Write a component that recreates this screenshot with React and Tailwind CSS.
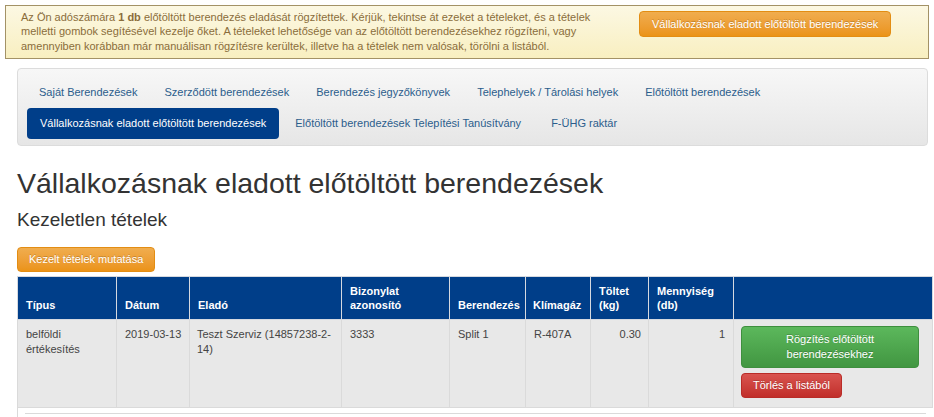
import React from "react";

const navRow1 = ["Saját Berendezések", "Szerződött berendezések", "Berendezés jegyzőkönyvek", "Telephelyek / Tárolási helyek", "Előtöltött berendezések"];
const navRow2 = [
  { label: "Vállalkozásnak eladott előtöltött berendezések", active: true },
  { label: "Előtöltött berendezések Telepítési Tanúsítvány" },
  { label: "F-ÜHG raktár" },
];

const cols = [99, 73, 152, 108, 76, 65, 58, 85, 199];

export default function App() {
  return (
    <div className="w-[934px] h-[417px] overflow-hidden bg-white font-['Liberation_Sans',Arial,sans-serif] text-[#333]">
      {/* Alert */}
      <div className="px-[5px] pt-[5px]">
        <div className="flex border border-[#a39266] bg-gradient-to-b from-[#fcf8e3] to-[#f8efc0] pt-[4px] pb-[5px] pl-[15px]">
          <p className="w-[600px] text-[11px] leading-[14.3px] text-[#8a6d3b]">
            Az Ön adószámára <b>1 db</b> előtöltött berendezés eladását rögzítettek. Kérjük, tekintse át ezeket a tételeket, és a tételek
            <br />
            melletti gombok segítésével kezelje őket. A tételeket lehetősége van az előtöltött berendezésekhez rögzíteni, vagy
            <br />
            amennyiben korábban már manuálisan rögzítésre kerültek, illetve ha a tételek nem valósak, törölni a listából.
          </p>
          <div className="ml-[18px] pt-px">
            <button className="h-[26px] px-[12px] rounded-[4px] border border-[#e38d13] bg-gradient-to-b from-[#f0ad4e] to-[#eb9316] text-[11px] text-white [text-shadow:0_-1px_0_rgba(0,0,0,0.2)] whitespace-nowrap">
              Vállalkozásnak eladott előtöltött berendezések
            </button>
          </div>
        </div>
      </div>

      <div className="pl-[17px] pr-[2px]">
        {/* Nav pills */}
        <div className="mt-[9px] w-[911px] rounded-[4px] border border-[#dcdcdc] bg-gradient-to-b from-[#f7f7f7] to-[#e6e6e6] px-[9px] pt-[8px] pb-[6px]">
          <ul className="flex flex-wrap gap-x-[3px] text-[11px] leading-[15px]">
            {navRow1.map((t) => (
              <li key={t} className="px-[12px] py-[8px] text-[#2b5d8c] whitespace-nowrap">{t}</li>
            ))}
          </ul>
          <ul className="flex flex-wrap gap-x-[2px] text-[11px] leading-[15px]">
            {navRow2.map((t) => (
              <li
                key={t.label}
                className={
                  t.active
                    ? "px-[13px] py-[8px] rounded-[4px] bg-[#003e89] text-white whitespace-nowrap"
                    : "px-[14px] py-[8px] text-[#2b5d8c] whitespace-nowrap"
                }
              >
                {t.label}
              </li>
            ))}
          </ul>
        </div>

        <h1 className="mt-[21px] text-[28.5px] leading-[32px] font-normal">Vállalkozásnak eladott előtöltött berendezések</h1>
        <h2 className="mt-[10px] text-[19px] leading-[22px] font-normal">Kezeletlen tételek</h2>

        <button className="mt-[16px] h-[25px] px-[11px] rounded-[4px] border border-[#e38d13] bg-gradient-to-b from-[#f0ad4e] to-[#eb9316] text-[11px] text-white [text-shadow:0_-1px_0_rgba(0,0,0,0.2)]">
          Kezelt tételek mutatása
        </button>

        {/* Table */}
        <table className="mt-[4px] w-[915px] table-fixed border-collapse text-[11px]">
          <colgroup>
            {cols.map((w, i) => (
              <col key={i} style={{ width: w }} />
            ))}
          </colgroup>
          <thead>
            <tr className="bg-[#003e89] text-white font-bold leading-[14px] text-left align-bottom">
              <th className="border border-[#d5d9e0] px-[8px] py-[7px]">Típus</th>
              <th className="border border-[#d5d9e0] px-[8px] py-[7px]">Dátum</th>
              <th className="border border-[#d5d9e0] px-[8px] py-[7px]">Eladó</th>
              <th className="border border-[#d5d9e0] px-[8px] py-[7px]">Bizonylat<br />azonosító</th>
              <th className="border border-[#d5d9e0] px-[8px] py-[7px]">Berendezés</th>
              <th className="border border-[#d5d9e0] px-[7px] py-[7px]">Klímagáz</th>
              <th className="border border-[#d5d9e0] px-[8px] py-[7px]">Töltet<br />(kg)</th>
              <th className="border border-[#d5d9e0] px-[8px] py-[7px]">Mennyiség<br />(db)</th>
              <th className="border border-[#d5d9e0] px-[8px] py-[7px]"></th>
            </tr>
          </thead>
          <tbody>
            <tr className="bg-[#e8e8e8] leading-[15px] align-top text-[#444]">
              <td className="border border-[#dadada] px-[8px] pt-[7px]">belföldi<br />értékesítés</td>
              <td className="border border-[#dadada] pl-[8px] pr-[4px] pt-[7px] whitespace-nowrap">2019-03-13</td>
              <td className="border border-[#dadada] px-[7px] pt-[7px]">
                <span className="whitespace-nowrap">Teszt Szerviz (14857238-2-</span>
                <br />
                14)
              </td>
              <td className="border border-[#dadada] px-[8px] pt-[7px]">3333</td>
              <td className="border border-[#dadada] px-[8px] pt-[7px]">Split 1</td>
              <td className="border border-[#dadada] px-[8px] pt-[7px]">R-407A</td>
              <td className="border border-[#dadada] px-[7px] pt-[7px] text-right">0.30</td>
              <td className="border border-[#dadada] px-[8px] pt-[7px] text-right">1</td>
              <td className="border border-[#dadada] pl-[7px] pt-[6px] pb-[9px]">
                <div className="flex flex-col items-start gap-[5px]">
                  <button className="h-[42px] w-[178px] rounded-[4px] border border-[#3e8f3e] bg-gradient-to-b from-[#5cb85c] to-[#419641] text-[11px] leading-[15px] text-white [text-shadow:0_-1px_0_rgba(0,0,0,0.2)]">
                    Rögzítés előtöltött
                    <br />
                    berendezésekhez
                  </button>
                  <button className="h-[25px] px-[11px] rounded-[4px] border border-[#b92c28] bg-gradient-to-b from-[#d9534f] to-[#c12e2a] text-[11px] text-white [text-shadow:0_-1px_0_rgba(0,0,0,0.2)]">
                    Törlés a listából
                  </button>
                </div>
              </td>
            </tr>
            <tr>
              <td colSpan={9} className="border-l border-[#dadada] px-[7px] pt-[5px]">
                <div className="h-[20px] border-t border-[#dadada]" />
              </td>
            </tr>
          </tbody>
        </table>
      </div>
    </div>
  );
}
